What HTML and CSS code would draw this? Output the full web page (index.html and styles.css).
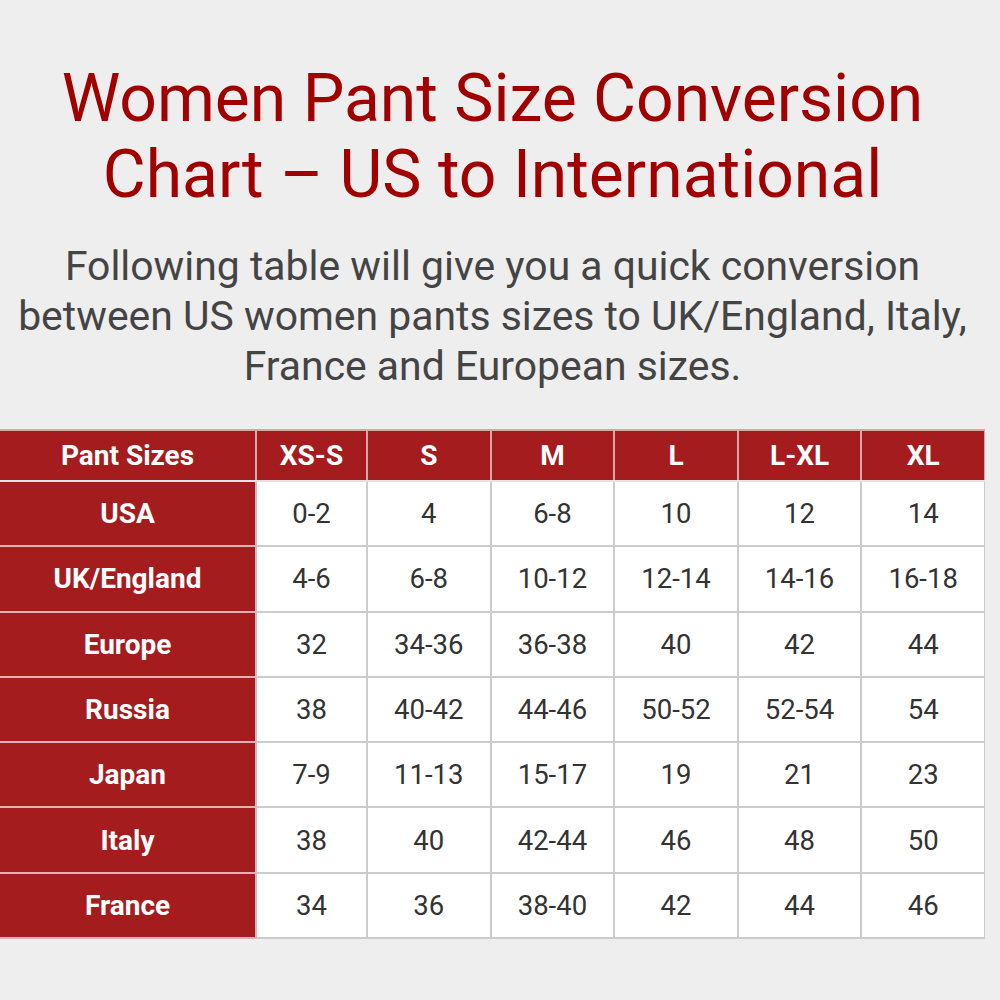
FILE: index.html
```html
<!DOCTYPE html>
<html>
<head>
<meta charset="utf-8">
<link rel="stylesheet" href="styles.css">
</head>
<body>
<main class="page">
<h1 class="title">Women Pant Size Conversion<br>Chart – US to International</h1>
<p class="intro">Following table will give you a quick conversion<br>between US women pants sizes to UK/England, Italy,<br>France and European sizes.</p>
<table class="chart">
  <colgroup>
    <col class="c-label"><col class="c-xss"><col class="c-n"><col class="c-n"><col class="c-n"><col class="c-n"><col class="c-n">
  </colgroup>
  <thead>
    <tr><th>Pant Sizes</th><th>XS-S</th><th>S</th><th>M</th><th>L</th><th>L-XL</th><th>XL</th></tr>
  </thead>
  <tbody>
    <tr><th>USA</th><td>0-2</td><td>4</td><td>6-8</td><td>10</td><td>12</td><td>14</td></tr>
    <tr><th>UK/England</th><td>4-6</td><td>6-8</td><td>10-12</td><td>12-14</td><td>14-16</td><td>16-18</td></tr>
    <tr><th>Europe</th><td>32</td><td>34-36</td><td>36-38</td><td>40</td><td>42</td><td>44</td></tr>
    <tr><th>Russia</th><td>38</td><td>40-42</td><td>44-46</td><td>50-52</td><td>52-54</td><td>54</td></tr>
    <tr><th>Japan</th><td>7-9</td><td>11-13</td><td>15-17</td><td>19</td><td>21</td><td>23</td></tr>
    <tr><th>Italy</th><td>38</td><td>40</td><td>42-44</td><td>46</td><td>48</td><td>50</td></tr>
    <tr><th>France</th><td>34</td><td>36</td><td>38-40</td><td>42</td><td>44</td><td>46</td></tr>
  </tbody>
</table>
</main>
</body>
</html>
```
FILE: styles.css
```css
html, body {
  margin: 0;
  padding: 0;
  background: #eeeeee;
  font-family: Roboto, "Noto Sans", sans-serif;
}
.page {
  display: block;
  width: 985px;
  overflow: hidden;
}
.title {
  margin: 61px 0 0;
  text-align: center;
  font-size: 66px;
  line-height: 76px;
  font-weight: 400;
  color: #a00000;
}
.intro {
  margin: 28px 0 0;
  text-align: center;
  font-size: 40.9px;
  line-height: 50px;
  color: #444444;
  white-space: nowrap;
}
.chart {
  margin: 38px 0 0;
  border-collapse: collapse;
  table-layout: fixed;
  width: 985px;
}
.c-label { width: 256px; }
.c-xss { width: 111px; }
.c-n { width: 123.6px; }
.chart th,
.chart td {
  padding: 0;
  text-align: center;
  border: 2px solid #cccccc;
}
.chart thead th {
  height: 49px;
  background: #a51c1f;
  color: #ffffff;
  font-weight: 700;
  font-size: 28px;
  border-color: #d9a6a7;
  border-bottom-color: #e3e3e3;
}
.chart tbody th {
  height: 63.3px;
  background: #a51c1f;
  color: #ffffff;
  font-weight: 700;
  font-size: 28px;
  border-color: #e2b3b4;
}
.chart tbody td {
  height: 63.3px;
  background: #ffffff;
  color: #333333;
  font-size: 27.5px;
}
.chart thead th:first-child,
.chart tbody th {
  border-left: none;
}
```
